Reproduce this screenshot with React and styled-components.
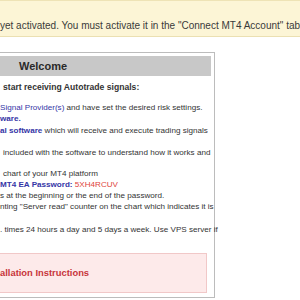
import React from "react";
import styled, { createGlobalStyle } from "styled-components";

const Global = createGlobalStyle`
  html, body { margin: 0; padding: 0; background: #fff; overflow: hidden; }
  body { font-family: "Liberation Sans", Arial, sans-serif; color: #333; }
`;

const Banner = styled.div`
  height: 37px;
  box-sizing: border-box;
  background: #fcf5d6;
  border-top: 1px solid #eee3b6;
  border-bottom: 1px solid #ebe0b2;
  padding: 19px 0 0 0;
  font-size: 10px;
  line-height: 12px;
  white-space: nowrap;
  color: #3a3a3a;
`;

const Panel = styled.div`
  margin: 15px 0 0 -10px;
  width: 225px;
  box-sizing: border-box;
  border: 1px solid #bcbcbc;
  padding: 3px 3px 4px;
`;

const Header = styled.div`
  height: 20px;
  background: #c8c8c8;
  font-weight: bold;
  font-size: 11px;
  line-height: 20px;
  padding-left: 25px;
  color: #2a2a2a;
`;

const Body = styled.div`
  padding: 5px 0 0 6px;
  font-size: 8.1px;
  white-space: nowrap;
`;

const Title = styled.div`
  font-weight: bold;
  font-size: 8.6px;
  line-height: 12px;
  margin-bottom: 9px;
  padding-left: ${(p) => p.indent || 0}px;
`;

const Line = styled.div`
  height: ${(p) => p.h || 11}px;
  line-height: ${(p) => p.h || 11}px;
  padding-left: ${(p) => p.indent || 0}px;
`;

const Link = styled.span`
  color: #3535a6;
  font-weight: ${(p) => (p.bold ? "bold" : "normal")};
`;

const Pass = styled.span`
  color: #e0443c;
`;

const Notice = styled.div`
  margin: 18px 4px 0 -3px;
  height: 40px;
  box-sizing: border-box;
  background: #fdeaea;
  border: 1px solid #f1c8c8;
  color: #c7353a;
  font-weight: bold;
  font-size: 9.4px;
  line-height: 38px;
  padding-left: 8px;
`;

export default function App() {
  return (
    <>
      <Global />
      <Banner>yet activated. You must activate it in the "Connect MT4 Account" tab</Banner>
      <Panel>
        <Header>Welcome</Header>
        <Body>
          <Title indent={3}>start receiving Autotrade signals:</Title>
          <Line><Link>Signal Provider(s)</Link> and have set the desired risk settings.</Line>
          <Line h={12}><Link bold>ware.</Link></Line>
          <Line><Link bold>al software</Link> which will receive and execute trading signals</Line>
          <Line />
          <Line indent={3}>included with the software to understand how it works and</Line>
          <Line h={10.5} />
          <Line h={10.5} indent={3}>chart of your MT4 platform</Line>
          <Line><Link bold>MT4 EA Password:</Link> <Pass>5XH4RCUV</Pass></Line>
          <Line>s at the beginning or the end of the password.</Line>
          <Line>nting "Server read" counter on the chart which indicates it is</Line>
          <Line h={12} />
          <Line>. times 24 hours a day and 5 days a week. Use VPS server if</Line>
        </Body>
        <Notice>allation Instructions</Notice>
      </Panel>
    </>
  );
}
